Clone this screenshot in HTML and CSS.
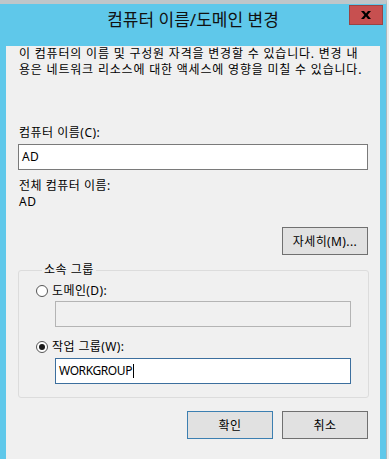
FILE: index.html
```html
<!DOCTYPE html>
<html lang="ko">
<head>
    <meta charset="UTF-8">
    <meta name="viewport" content="width=device-width, initial-scale=1.0">
    <title>컴퓨터 이름/도메인 변경</title>
    <link rel="stylesheet" href="styles.css">
</head>
<body>
    <div class="screen">
        <div class="window">
            <div class="titlebar">
                <span class="title">컴퓨터 이름/도메인 변경</span>
                <span class="close">
                    <svg width="10" height="8" viewBox="0 0 10 8">
                        <path d="M0 0h3l2 2.4 2-2.4h3l-3.4 4 3.4 4h-3l-2-2.4-2 2.4h-3l3.4-4z" fill="#000"/>
                    </svg>
                </span>
            </div>
            <div class="client">
                <p class="desc">이 컴퓨터의 이름 및 구성원 자격을 변경할 수 있습니다. 변경 내<br>용은 네트워크 리소스에 대한 액세스에 영향을 미칠 수 있습니다.</p>

                <div class="label label-first">컴퓨터 이름(C):</div>
                <div class="field">AD</div>

                <div class="label label-full">전체 컴퓨터 이름:</div>
                <div class="label">AD</div>

                <div class="row-right">
                    <button class="btn">자세히(M)...</button>
                </div>

                <fieldset class="group">
                    <legend>소속 그룹</legend>
                    <div class="radio-row">
                        <span class="radio"></span>도메인(D):
                    </div>
                    <div class="field field-sub field-disabled"></div>
                    <div class="radio-row radio-row-second">
                        <span class="radio radio-checked"></span>작업 그룹(W):
                    </div>
                    <div class="field field-sub field-focus">WORKGROUP<span class="caret"></span></div>
                </fieldset>

                <div class="actions">
                    <button class="btn btn-default">확인</button>
                    <button class="btn">취소</button>
                </div>
            </div>
        </div>
    </div>
</body>
</html>
```

FILE: styles.css
```css
* {
    box-sizing: border-box;
}
body {
    margin: 0;
    font-family: "Noto Sans", "Noto Sans CJK KR", sans-serif;
    font-size: 12px;
    color: #000;
    background-color: #ececec;
}
.screen {
    width: 389px;
    height: 459px;
    overflow: hidden;
}
.window {
    position: relative;
    width: 387px;
    background-color: #5fc8ea;
    border-top: 4px solid #bfc6c9;
    border-right: 1px solid #a9b6bb;
    border-bottom: 1px solid #2e2e2e;
    padding: 0 6px 7px 6px;
}
.titlebar {
    height: 30px;
    padding-top: 6px;
    text-align: center;
}
.title {
    font-size: 17px;
    line-height: 20px;
    color: #111;
}
.close {
    position: absolute;
    top: 1px;
    right: 3px;
    width: 34px;
    height: 20px;
    background-color: #c75050;
    border: 1px solid #9a4444;
    display: flex;
    align-items: center;
    justify-content: center;
}
.client {
    height: 415px;
    background-color: #f0f0f0;
    padding: 0 12px;
    border-bottom: 1px solid #c9d6da;
}
.desc {
    margin: 12px 0 0 1px;
    line-height: 16px;
    letter-spacing: 0.8px;
    white-space: nowrap;
}
.label {
    line-height: 16px;
    padding-left: 1px;
    letter-spacing: 0.5px;
}
.label-first {
    margin-top: 47px;
}
.label-full {
    margin-top: 8px;
}
.field {
    height: 26px;
    margin-top: 3px;
    background: #fff;
    border: 1px solid #7a7a7a;
    padding: 0 3px;
    line-height: 24px;
    display: flex;
    align-items: center;
    letter-spacing: 0.3px;
}
.field-sub {
    width: 296px;
    margin-left: 19px;
}
.field-disabled {
    margin-top: 2px;
    background: #f0f0f0;
    border-color: #b4b4b4;
}
.field-focus {
    border-color: #3c6f9e;
    letter-spacing: -0.4px;
}
.caret {
    display: inline-block;
    width: 1px;
    height: 14px;
    margin-left: 1px;
    background: #000;
}
.row-right {
    display: flex;
    justify-content: flex-end;
    margin-top: 17px;
}
.btn {
    width: 86px;
    height: 28px;
    font-family: inherit;
    font-size: 12px;
    letter-spacing: 0.4px;
    color: #000;
    background-color: #e1e1e1;
    border: 1px solid #707070;
    padding: 0;
}
.btn-default {
    border-color: #3c7fb1;
}
.group {
    margin: 7px 0 0 0;
    padding: 5px 17px 13px 17px;
    border: 1px solid #dcdcdc;
    border-radius: 3px;
}
.group legend {
    margin-left: 6px;
    padding: 0 2px;
    line-height: 16px;
    letter-spacing: 0.5px;
}
.radio-row {
    display: flex;
    align-items: center;
    gap: 4px;
    line-height: 16px;
    letter-spacing: 0.4px;
}
.radio-row-second {
    margin-top: 12px;
}
.radio {
    width: 12px;
    height: 12px;
    border-radius: 50%;
    border: 1px solid #555;
    background: #fff;
    display: flex;
    align-items: center;
    justify-content: center;
}
.radio-checked::after {
    content: "";
    width: 6px;
    height: 6px;
    border-radius: 50%;
    background: #1a1a1a;
}
.actions {
    display: flex;
    justify-content: flex-end;
    gap: 9px;
    margin-top: 13px;
}
```
